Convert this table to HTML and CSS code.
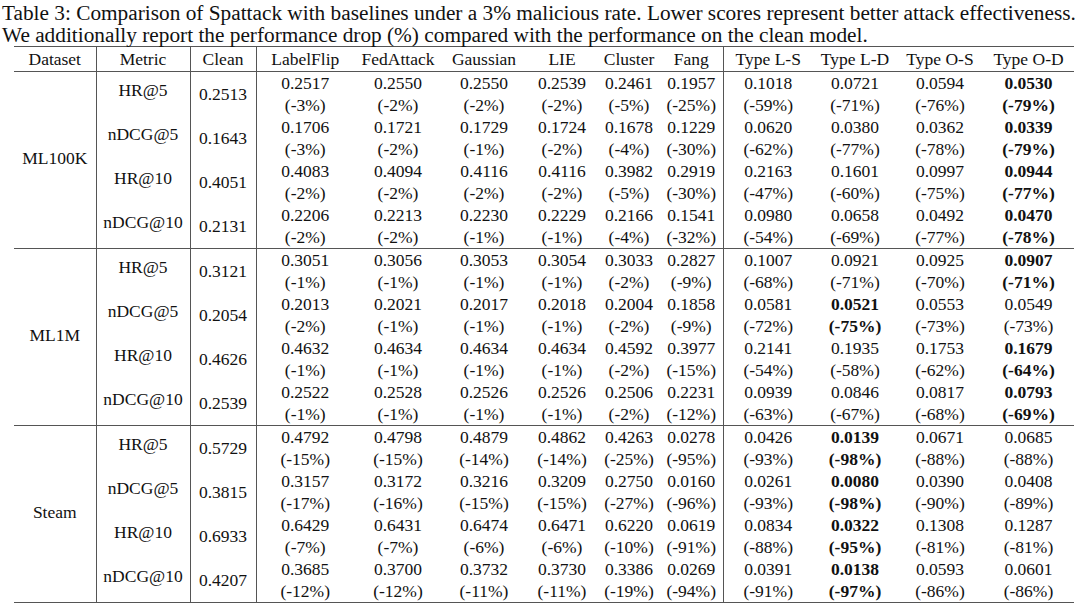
FILE: index.html
```html
<!DOCTYPE html>
<html>
<head>
<meta charset="utf-8">
<link rel="stylesheet" href="styles.css">
</head>
<body>
<div class="page">
<p class="caption">Table 3: Comparison of Spattack with baselines under a 3% malicious rate. Lower scores represent better attack effectiveness.<br>We additionally report the performance drop (%) compared with the performance on the clean model.</p>
<table class="results">
<colgroup>
<col class="c-ds"><col class="c-metric"><col class="c-clean">
<col class="c-lf"><col class="c-fa"><col class="c-ga"><col class="c-lie"><col class="c-cl"><col class="c-fang">
<col class="c-ls"><col class="c-ld"><col class="c-os"><col class="c-od">
</colgroup>
<thead>
<tr class="head"><th class="vr">Dataset</th><th class="vr">Metric</th><th class="vr">Clean</th><th>LabelFlip</th><th>FedAttack</th><th>Gaussian</th><th>LIE</th><th>Cluster</th><th class="vr">Fang</th><th>Type L-S</th><th>Type L-D</th><th>Type O-S</th><th>Type O-D</th></tr>
</thead>
<tbody class="group">
<tr><td rowspan="4" class="ds vr">ML100K</td><td class="metric vr">HR@5</td><td class="clean vr">0.2513</td><td>0.2517<br>(-3%)</td><td>0.2550<br>(-2%)</td><td>0.2550<br>(-2%)</td><td>0.2539<br>(-2%)</td><td>0.2461<br>(-5%)</td><td class="vr">0.1957<br>(-25%)</td><td>0.1018<br>(-59%)</td><td>0.0721<br>(-71%)</td><td>0.0594<br>(-76%)</td><td class="b">0.0530<br>(-79%)</td></tr>
<tr><td class="metric vr">nDCG@5</td><td class="clean vr">0.1643</td><td>0.1706<br>(-3%)</td><td>0.1721<br>(-2%)</td><td>0.1729<br>(-1%)</td><td>0.1724<br>(-2%)</td><td>0.1678<br>(-4%)</td><td class="vr">0.1229<br>(-30%)</td><td>0.0620<br>(-62%)</td><td>0.0380<br>(-77%)</td><td>0.0362<br>(-78%)</td><td class="b">0.0339<br>(-79%)</td></tr>
<tr><td class="metric vr">HR@10</td><td class="clean vr">0.4051</td><td>0.4083<br>(-2%)</td><td>0.4094<br>(-2%)</td><td>0.4116<br>(-2%)</td><td>0.4116<br>(-2%)</td><td>0.3982<br>(-5%)</td><td class="vr">0.2919<br>(-30%)</td><td>0.2163<br>(-47%)</td><td>0.1601<br>(-60%)</td><td>0.0997<br>(-75%)</td><td class="b">0.0944<br>(-77%)</td></tr>
<tr><td class="metric vr">nDCG@10</td><td class="clean vr">0.2131</td><td>0.2206<br>(-2%)</td><td>0.2213<br>(-2%)</td><td>0.2230<br>(-1%)</td><td>0.2229<br>(-1%)</td><td>0.2166<br>(-4%)</td><td class="vr">0.1541<br>(-32%)</td><td>0.0980<br>(-54%)</td><td>0.0658<br>(-69%)</td><td>0.0492<br>(-77%)</td><td class="b">0.0470<br>(-78%)</td></tr>
</tbody>
<tbody class="group">
<tr><td rowspan="4" class="ds vr">ML1M</td><td class="metric vr">HR@5</td><td class="clean vr">0.3121</td><td>0.3051<br>(-1%)</td><td>0.3056<br>(-1%)</td><td>0.3053<br>(-1%)</td><td>0.3054<br>(-1%)</td><td>0.3033<br>(-2%)</td><td class="vr">0.2827<br>(-9%)</td><td>0.1007<br>(-68%)</td><td>0.0921<br>(-71%)</td><td>0.0925<br>(-70%)</td><td class="b">0.0907<br>(-71%)</td></tr>
<tr><td class="metric vr">nDCG@5</td><td class="clean vr">0.2054</td><td>0.2013<br>(-2%)</td><td>0.2021<br>(-1%)</td><td>0.2017<br>(-1%)</td><td>0.2018<br>(-1%)</td><td>0.2004<br>(-2%)</td><td class="vr">0.1858<br>(-9%)</td><td>0.0581<br>(-72%)</td><td class="b">0.0521<br>(-75%)</td><td>0.0553<br>(-73%)</td><td>0.0549<br>(-73%)</td></tr>
<tr><td class="metric vr">HR@10</td><td class="clean vr">0.4626</td><td>0.4632<br>(-1%)</td><td>0.4634<br>(-1%)</td><td>0.4634<br>(-1%)</td><td>0.4634<br>(-1%)</td><td>0.4592<br>(-2%)</td><td class="vr">0.3977<br>(-15%)</td><td>0.2141<br>(-54%)</td><td>0.1935<br>(-58%)</td><td>0.1753<br>(-62%)</td><td class="b">0.1679<br>(-64%)</td></tr>
<tr><td class="metric vr">nDCG@10</td><td class="clean vr">0.2539</td><td>0.2522<br>(-1%)</td><td>0.2528<br>(-1%)</td><td>0.2526<br>(-1%)</td><td>0.2526<br>(-1%)</td><td>0.2506<br>(-2%)</td><td class="vr">0.2231<br>(-12%)</td><td>0.0939<br>(-63%)</td><td>0.0846<br>(-67%)</td><td>0.0817<br>(-68%)</td><td class="b">0.0793<br>(-69%)</td></tr>
</tbody>
<tbody class="group">
<tr><td rowspan="4" class="ds vr">Steam</td><td class="metric vr">HR@5</td><td class="clean vr">0.5729</td><td>0.4792<br>(-15%)</td><td>0.4798<br>(-15%)</td><td>0.4879<br>(-14%)</td><td>0.4862<br>(-14%)</td><td>0.4263<br>(-25%)</td><td class="vr">0.0278<br>(-95%)</td><td>0.0426<br>(-93%)</td><td class="b">0.0139<br>(-98%)</td><td>0.0671<br>(-88%)</td><td>0.0685<br>(-88%)</td></tr>
<tr><td class="metric vr">nDCG@5</td><td class="clean vr">0.3815</td><td>0.3157<br>(-17%)</td><td>0.3172<br>(-16%)</td><td>0.3216<br>(-15%)</td><td>0.3209<br>(-15%)</td><td>0.2750<br>(-27%)</td><td class="vr">0.0160<br>(-96%)</td><td>0.0261<br>(-93%)</td><td class="b">0.0080<br>(-98%)</td><td>0.0390<br>(-90%)</td><td>0.0408<br>(-89%)</td></tr>
<tr><td class="metric vr">HR@10</td><td class="clean vr">0.6933</td><td>0.6429<br>(-7%)</td><td>0.6431<br>(-7%)</td><td>0.6474<br>(-6%)</td><td>0.6471<br>(-6%)</td><td>0.6220<br>(-10%)</td><td class="vr">0.0619<br>(-91%)</td><td>0.0834<br>(-88%)</td><td class="b">0.0322<br>(-95%)</td><td>0.1308<br>(-81%)</td><td>0.1287<br>(-81%)</td></tr>
<tr><td class="metric vr">nDCG@10</td><td class="clean vr">0.4207</td><td>0.3685<br>(-12%)</td><td>0.3700<br>(-12%)</td><td>0.3732<br>(-11%)</td><td>0.3730<br>(-11%)</td><td>0.3386<br>(-19%)</td><td class="vr">0.0269<br>(-94%)</td><td>0.0391<br>(-91%)</td><td class="b">0.0138<br>(-97%)</td><td>0.0593<br>(-86%)</td><td>0.0601<br>(-86%)</td></tr>
</tbody>
</table>
</div>
</body>
</html>
```
FILE: styles.css
```css
html, body {
  margin: 0;
  padding: 0;
  background: #ffffff;
}
body {
  font-family: "Liberation Serif", "Times New Roman", serif;
  color: #111111;
  width: 1080px;
  height: 605px;
  overflow: hidden;
}
.page {
  padding: 2px 0 0 2px;
}
.caption {
  margin: 0;
  font-size: 21.3px;
  line-height: 22px;
  white-space: nowrap;
}
.results {
  margin: 0 0 0 12px;
  border-collapse: collapse;
  table-layout: fixed;
  width: 1060px;
  font-size: 17.5px;
  border-top: 1px solid #555;
  border-bottom: 1px solid #555;
}
.c-ds { width: 82px; }
.c-metric { width: 94px; }
.c-clean { width: 66px; }
.c-lf { width: 98px; }
.c-fa { width: 88px; }
.c-ga { width: 84px; }
.c-lie { width: 72px; }
.c-cl { width: 62px; }
.c-fang { width: 63px; }
.c-ls { width: 90px; }
.c-ld { width: 84px; }
.c-os { width: 86px; }
.c-od { width: 91px; }
.results th,
.results td {
  padding: 0;
  text-align: center;
  vertical-align: middle;
  white-space: nowrap;
}
.results th {
  font-weight: normal;
  height: 24px;
  line-height: 24px;
  border-bottom: 1px solid #555;
}
.results td {
  line-height: 22px;
}
.results tbody tr {
  height: 44px;
}
.results .vr {
  border-right: 1px solid #555;
}
.group + .group tr:first-child td {
  border-top: 1px solid #555;
}
.results .metric {
  padding-bottom: 8px;
}
.results .ds {
  padding-bottom: 4px;
}
.results .b {
  font-weight: bold;
}
```
